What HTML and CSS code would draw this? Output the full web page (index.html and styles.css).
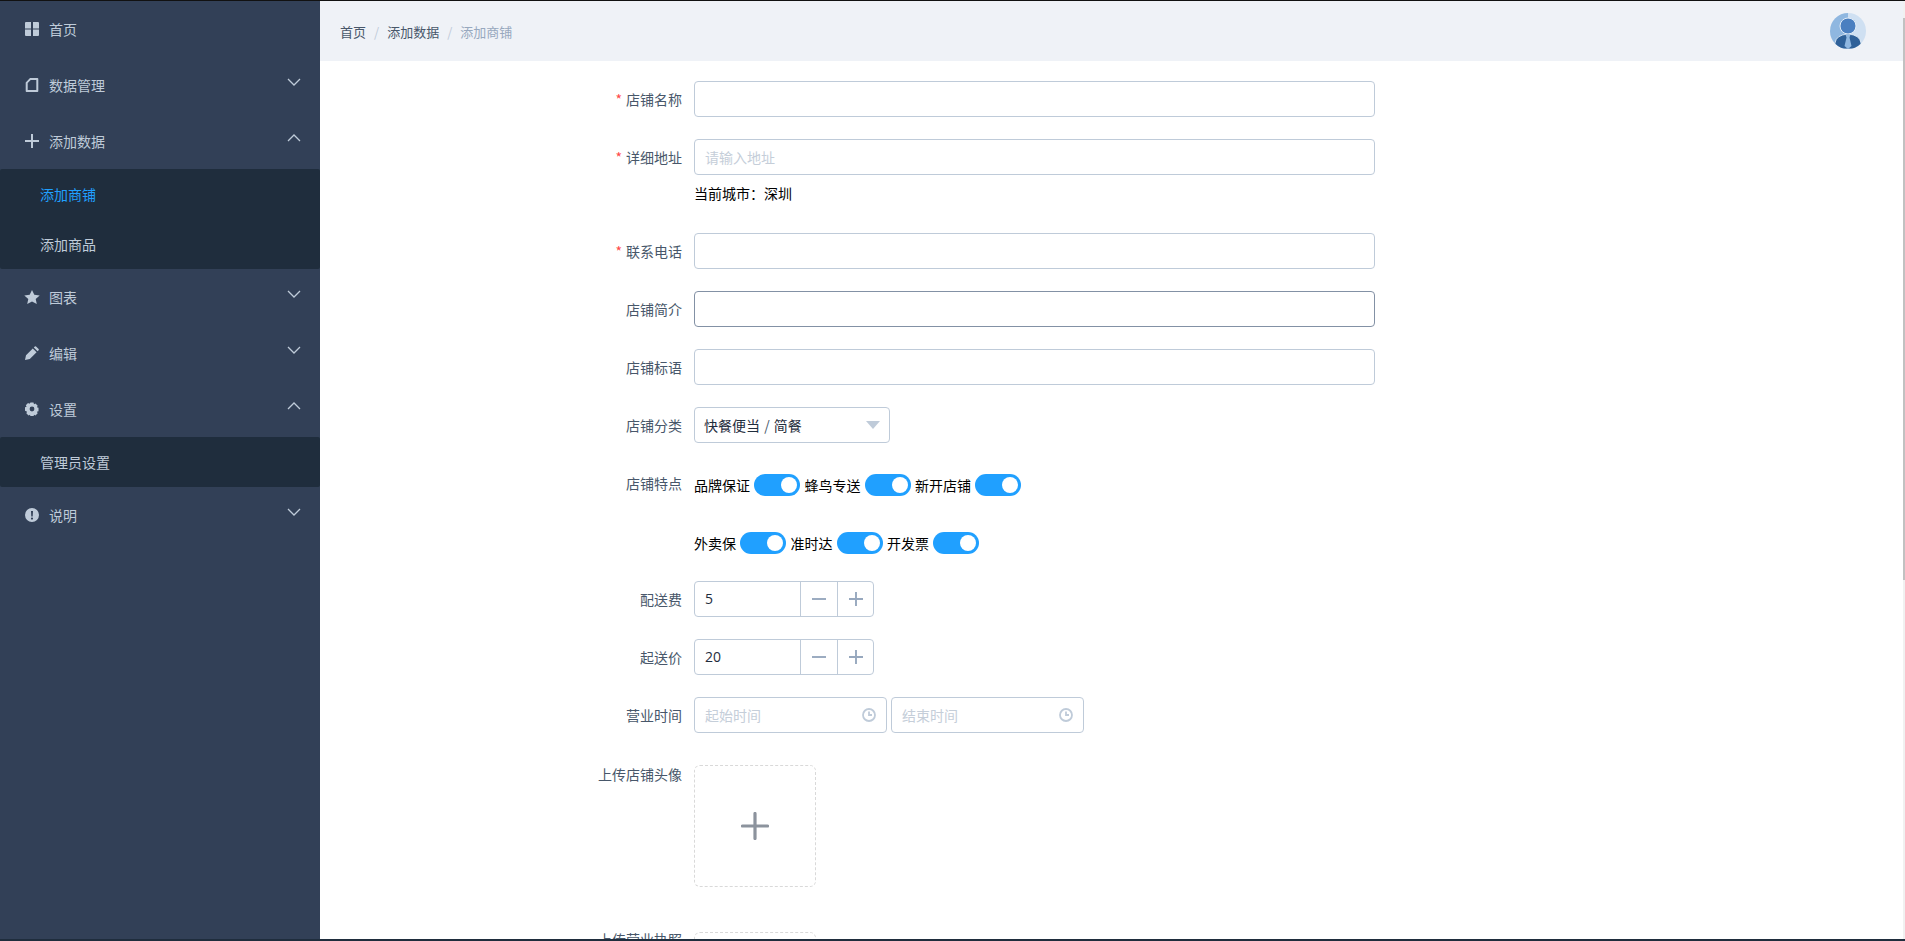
FILE: index.html
```html
<!DOCTYPE html>
<html lang="zh-CN">
<head>
    <meta charset="UTF-8">
    <meta name="viewport" content="width=device-width, initial-scale=1.0">
    <title>添加商铺</title>
    <link rel="stylesheet" href="styles.css">
</head>
<body>
    <div class="app">
        <!-- 侧边菜单 -->
        <aside class="sidebar">
            <div class="menu-item">
                <svg class="menu-icon" viewBox="0 0 14 14"><path d="M0 1q0-1 1-1h5v6.600H0zM8 0h5q1 0 1 1v5.600H8zM0 7.400h6V14H1q-1 0-1-1zM8 7.400h6V13q0 1-1 1H8z"/></svg>
                <span>首页</span>
            </div>
            <div class="menu-item">
                <svg class="menu-icon" viewBox="0 0 14 14"><path fill-rule="evenodd" d="M5 0h7.500q.8 0 .8 1v12q0 1-.8 1h-11q-.8 0-.8-1V4.500zM5.700 2 2.700 5v7h8.600V2z"/></svg>
                <span>数据管理</span>
                <svg class="arrow" viewBox="0 0 14 8"><path d="M1 1l6 6 6-6"/></svg>
            </div>
            <div class="menu-item">
                <svg class="menu-icon" viewBox="0 0 14 14"><path d="M6 0h2v6h6v2H8v6H6V8H0V6h6z"/></svg>
                <span>添加数据</span>
                <svg class="arrow" viewBox="0 0 14 8"><path d="M1 7l6-6 6 6"/></svg>
            </div>
            <div class="submenu">
                <div class="submenu-item active">添加商铺</div>
                <div class="submenu-item">添加商品</div>
            </div>
            <div class="menu-item">
                <svg class="menu-icon star" viewBox="0 0 16 14"><path d="M8 0l2.300 4.800 5.400.6-4 3.500 1.100 5.100L8 11.400 3.200 14l1.100-5.100-4-3.500 5.400-.6z"/></svg>
                <span>图表</span>
                <svg class="arrow" viewBox="0 0 14 8"><path d="M1 1l6 6 6-6"/></svg>
            </div>
            <div class="menu-item">
                <svg class="menu-icon" viewBox="0 0 14 14"><path d="M0 14l1-4.800 6.800-6.800 3.800 3.800L4.800 13zM8.800 1.400l1-1q.6-.5 1.200 0l2.600 2.600q.5.600 0 1.200l-1 1z"/></svg>
                <span>编辑</span>
                <svg class="arrow" viewBox="0 0 14 8"><path d="M1 1l6 6 6-6"/></svg>
            </div>
            <div class="menu-item">
                <svg class="menu-icon" viewBox="0 0 14 14"><path fill-rule="evenodd" d="M5.500 .5h3l.5 1.700 1.500-.7 2.200 2.200-.8 1.500 1.600.6v3.400l-1.600.6.800 1.500-2.200 2.200-1.500-.7-.5 1.700h-3l-.5-1.700-1.500.7-2.200-2.200.8-1.500L0 8.700V5.300l1.600-.6-.8-1.500L3 1l1.500.7zM7 4.600a2.400 2.400 0 1 0 0 4.800 2.400 2.400 0 0 0 0-4.800z"/></svg>
                <span>设置</span>
                <svg class="arrow" viewBox="0 0 14 8"><path d="M1 7l6-6 6 6"/></svg>
            </div>
            <div class="submenu">
                <div class="submenu-item">管理员设置</div>
            </div>
            <div class="menu-item">
                <svg class="menu-icon" viewBox="0 0 14 14"><path fill-rule="evenodd" d="M7 0a7 7 0 1 1 0 14A7 7 0 0 1 7 0zM6 3l.3 5.500h1.400L8 3zM7 9.500a1.100 1.100 0 1 0 0 2.200 1.100 1.100 0 0 0 0-2.200z"/></svg>
                <span>说明</span>
                <svg class="arrow" viewBox="0 0 14 8"><path d="M1 1l6 6 6-6"/></svg>
            </div>
        </aside>

        <div class="main">
            <!-- 顶部导航 -->
            <header class="topbar">
                <nav class="breadcrumb">
                    <span class="crumb">首页</span><span class="sep">/</span>
                    <span class="crumb">添加数据</span><span class="sep">/</span>
                    <span class="crumb current">添加商铺</span>
                </nav>
                <svg class="avatar" viewBox="0 0 36 36">
                    <defs><clipPath id="avatarClip"><circle cx="18" cy="18" r="18"/></clipPath></defs>
                    <g clip-path="url(#avatarClip)">
                        <rect width="18" height="36" fill="#8fb7e0"/>
                        <rect x="18" width="18" height="36" fill="#cfe0f2"/>
                        <path d="M5 36v-6q1-8 13-9 12 1 13 9v6z" fill="#2f6199" stroke="#e3edf7" stroke-width=".8"/>
                        <circle cx="18" cy="13" r="8" fill="#4a7fc0" stroke="#e3edf7" stroke-width="1"/>
                        <path d="M15.500 21.500h5l-1 3 2 8.500-3.500 3-3.500-3 2-8.500z" fill="#8fb7e0"/>
                    </g>
                </svg>
            </header>

            <!-- 表单 -->
            <form class="shop-form">
                <div class="form-row">
                    <label class="form-label required">店铺名称</label>
                    <div class="form-body"><div class="input"></div></div>
                </div>
                <div class="form-row">
                    <label class="form-label required">详细地址</label>
                    <div class="form-body">
                        <div class="input placeholder">请输入地址</div>
                        <div class="city-line">当前城市：深圳</div>
                    </div>
                </div>
                <div class="form-row">
                    <label class="form-label required">联系电话</label>
                    <div class="form-body"><div class="input"></div></div>
                </div>
                <div class="form-row">
                    <label class="form-label">店铺简介</label>
                    <div class="form-body"><div class="input focused"></div></div>
                </div>
                <div class="form-row">
                    <label class="form-label">店铺标语</label>
                    <div class="form-body"><div class="input"></div></div>
                </div>
                <div class="form-row">
                    <label class="form-label">店铺分类</label>
                    <div class="form-body">
                        <div class="select">
                            <span>快餐便当 <i class="slash">/</i> 简餐</span>
                            <b class="caret"></b>
                        </div>
                    </div>
                </div>
                <div class="form-row">
                    <label class="form-label">店铺特点</label>
                    <div class="form-body switches">
                        <span>品牌保证</span><i class="switch"></i>
                        <span>蜂鸟专送</span><i class="switch"></i>
                        <span>新开店铺</span><i class="switch"></i>
                    </div>
                </div>
                <div class="form-row">
                    <label class="form-label"></label>
                    <div class="form-body switches">
                        <span>外卖保</span><i class="switch"></i>
                        <span>准时达</span><i class="switch"></i>
                        <span>开发票</span><i class="switch"></i>
                    </div>
                </div>
                <div class="form-row">
                    <label class="form-label">配送费</label>
                    <div class="form-body">
                        <div class="number">
                            <span class="number-value">5</span>
                            <span class="number-btn"><svg viewBox="0 0 14 14"><path d="M0 7h14"/></svg></span>
                            <span class="number-btn"><svg viewBox="0 0 14 14"><path d="M0 7h14M7 0v14"/></svg></span>
                        </div>
                    </div>
                </div>
                <div class="form-row">
                    <label class="form-label">起送价</label>
                    <div class="form-body">
                        <div class="number">
                            <span class="number-value">20</span>
                            <span class="number-btn"><svg viewBox="0 0 14 14"><path d="M0 7h14"/></svg></span>
                            <span class="number-btn"><svg viewBox="0 0 14 14"><path d="M0 7h14M7 0v14"/></svg></span>
                        </div>
                    </div>
                </div>
                <div class="form-row">
                    <label class="form-label">营业时间</label>
                    <div class="form-body times">
                        <div class="time-input">
                            <span>起始时间</span>
                            <svg viewBox="0 0 14 14"><circle cx="7" cy="7" r="6"/><path d="M7 3.500V7h3"/></svg>
                        </div>
                        <div class="time-input">
                            <span>结束时间</span>
                            <svg viewBox="0 0 14 14"><circle cx="7" cy="7" r="6"/><path d="M7 3.500V7h3"/></svg>
                        </div>
                    </div>
                </div>
                <div class="form-row upload-row">
                    <label class="form-label">上传店铺头像</label>
                    <div class="form-body">
                        <div class="upload"><svg viewBox="0 0 28 28"><path d="M1.500 14h25M14 1.500v25"/></svg></div>
                    </div>
                </div>
                <div class="form-row upload-row">
                    <label class="form-label">上传营业执照</label>
                    <div class="form-body">
                        <div class="upload"><svg viewBox="0 0 28 28"><path d="M1.500 14h25M14 1.500v25"/></svg></div>
                    </div>
                </div>
            </form>
        </div>
    </div>
    <div class="scroll-track"><div class="scroll-thumb"></div></div>
    <div class="window-edge"></div>
</body>
</html>
```

FILE: styles.css
```css
* {
    box-sizing: border-box;
}
html, body {
    height: 100%;
    margin: 0;
    overflow: hidden;
}
body {
    font-family: "Noto Sans CJK SC", "Liberation Sans", sans-serif;
    font-size: 14px;
    border-top: 1px solid #111;
    background-color: #ffffff;
    position: relative;
}
.app {
    display: flex;
    height: 100%;
}

/* 侧边菜单 */
.sidebar {
    width: 320px;
    flex-shrink: 0;
    background-color: #324057;
    color: #bfcbd9;
}
.menu-item {
    height: 56px;
    display: flex;
    align-items: center;
    padding: 0 19px 0 25px;
}
.menu-icon {
    width: 14px;
    height: 14px;
    margin-right: 10px;
    fill: #bfcbd9;
    flex-shrink: 0;
}
.menu-icon.star {
    width: 16px;
    margin-left: -1px;
    margin-right: 9px;
}
.arrow {
    width: 14px;
    height: 8px;
    margin-left: auto;
    margin-bottom: 6px;
    fill: none;
    stroke: #bfcbd9;
    stroke-width: 1.300;
}
.submenu {
    background-color: #1f2d3d;
    border-radius: 2px;
}
.submenu-item {
    height: 50px;
    line-height: 50px;
    padding-left: 40px;
}
.submenu-item.active {
    color: #20a0ff;
}

/* 顶部导航 */
.main {
    flex: 1;
    min-width: 0;
    display: flex;
    flex-direction: column;
}
.topbar {
    height: 60px;
    flex-shrink: 0;
    background-color: #eff2f7;
    display: flex;
    align-items: center;
    justify-content: space-between;
    padding: 0 39px 0 20px;
}
.breadcrumb {
    font-size: 13px;
    color: #48576a;
    display: flex;
    align-items: center;
}
.sep {
    color: #bfcbd9;
    margin: 0 8px;
}
.crumb.current {
    color: #97a8be;
}
.avatar {
    width: 36px;
    height: 36px;
}

/* 表单 */
.shop-form {
    padding: 20px 0 0 0;
    width: 1055px;
}
.form-row {
    display: flex;
    margin-bottom: 22px;
}
.form-label {
    width: 374px;
    flex-shrink: 0;
    padding-right: 12px;
    text-align: right;
    line-height: 36px;
    color: #48576a;
}
.form-label.required::before {
    content: "*";
    color: #ff4949;
    margin-right: 4px;
}
.form-body {
    flex: 1;
    line-height: 36px;
    color: #000;
}
.input {
    height: 36px;
    border: 1px solid #bfcbd9;
    border-radius: 4px;
    padding: 0 10px;
    line-height: 34px;
    background-color: #fff;
}
.input.focused {
    border-color: #8391a5;
}
.placeholder {
    color: #c5ced9;
}
.city-line {
    height: 36px;
    line-height: 36px;
}
.select {
    width: 196px;
    height: 36px;
    border: 1px solid #bfcbd9;
    border-radius: 4px;
    padding: 0 9px;
    display: flex;
    align-items: center;
    justify-content: space-between;
    color: #1f2d3d;
}
.slash {
    font-style: normal;
    color: #48576a;
    margin: 0 1px;
}
.caret {
    width: 0;
    height: 0;
    border-left: 7px solid transparent;
    border-right: 7px solid transparent;
    border-top: 8px solid #bfcbd9;
}
.switches {
    display: flex;
    align-items: center;
    gap: 4.250px;
    height: 36px;
    padding-top: 4px;
}
.switch {
    width: 46px;
    height: 22px;
    border-radius: 11px;
    background-color: #20a0ff;
    position: relative;
    flex-shrink: 0;
}
.switch::after {
    content: "";
    position: absolute;
    top: 3px;
    right: 3px;
    width: 16px;
    height: 16px;
    border-radius: 50%;
    background-color: #fff;
}
.number {
    width: 180px;
    height: 36px;
    border: 1px solid #bfcbd9;
    border-radius: 4px;
    display: flex;
    color: #1f2d3d;
}
.number-value {
    flex: 1;
    padding-left: 10px;
    line-height: 34px;
    font-family: "Open Sans", "Noto Sans CJK SC", sans-serif;
}
.number-btn {
    width: 37px;
    border-left: 1px solid #bfcbd9;
    display: flex;
    align-items: center;
    justify-content: center;
}
.number-btn + .number-btn {
    width: 36px;
}
.number-btn svg {
    width: 14px;
    height: 14px;
    fill: none;
    stroke: #97a8be;
    stroke-width: 1.900;
}
.times {
    display: flex;
    gap: 4px;
}
.time-input {
    width: 193px;
    height: 36px;
    border: 1px solid #bfcbd9;
    border-radius: 4px;
    padding: 0 10px;
    display: flex;
    align-items: center;
    justify-content: space-between;
    color: #c5ced9;
}
.time-input svg {
    width: 14px;
    height: 14px;
    fill: none;
    stroke: #bfcbd9;
    stroke-width: 1.800;
}
.upload-row {
    margin-bottom: 33px;
}
.upload-row .form-label {
    line-height: 20px;
    padding-top: 9px;
}
.upload {
    width: 122px;
    height: 122px;
    margin-top: 10px;
    border: 1px dashed #d9d9d9;
    border-radius: 6px;
    display: flex;
    align-items: center;
    justify-content: center;
}
.upload-row + .upload-row .upload {
    margin-top: 12px;
}
.upload svg {
    width: 28px;
    height: 28px;
    fill: none;
    stroke: #8c939d;
    stroke-width: 3.200;
    stroke-linecap: round;
}

/* 滚动条 */
.scroll-track {
    position: absolute;
    top: 0;
    right: 0;
    bottom: 0;
    width: 2px;
    padding-top: 17px;
    background-color: #f1f1f1;
}
.scroll-thumb {
    height: 562px;
    background-color: #c1c1c1;
}
.window-edge {
    position: absolute;
    left: 0;
    right: 0;
    bottom: 0;
    height: 2px;
    background-color: #1f2d3d;
}
```
